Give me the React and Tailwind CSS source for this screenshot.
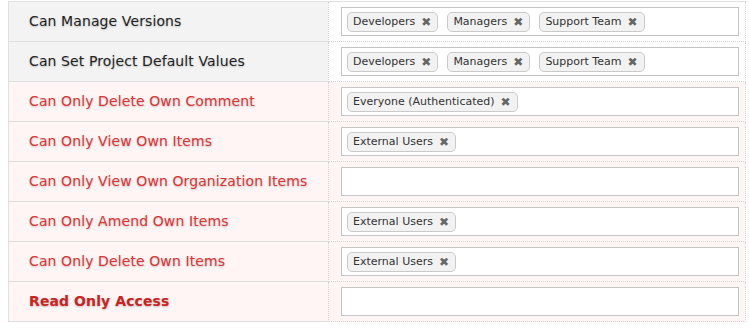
const rows = [
  { label: 'Can Manage Versions', tone: 'gray', tags: ['Developers', 'Managers', 'Support Team'] },
  { label: 'Can Set Project Default Values', tone: 'gray', tags: ['Developers', 'Managers', 'Support Team'] },
  { label: 'Can Only Delete Own Comment', tone: 'red', tags: ['Everyone (Authenticated)'] },
  { label: 'Can Only View Own Items', tone: 'red', tags: ['External Users'] },
  { label: 'Can Only View Own Organization Items', tone: 'red', tags: [] },
  { label: 'Can Only Amend Own Items', tone: 'red', tags: ['External Users'] },
  { label: 'Can Only Delete Own Items', tone: 'red', tags: ['External Users'] },
  { label: 'Read Only Access', tone: 'red', bold: true, tags: [] },
];

function Tag({ name }) {
  return (
    <span className="flex items-center h-[20px] pl-[5px] pr-[6px] gap-[6px] rounded-[5px] border border-[#cacaca] bg-[#f2f2f2] text-[11px] leading-none text-[#333] whitespace-nowrap">
      {name}
      <span className="text-[12px] text-[#666] font-bold leading-none">✖</span>
    </span>
  );
}

export default function App() {
  return (
    <div className="w-[749px] h-[328px] bg-white pt-px pl-2 font-['DejaVu_Sans','Verdana',sans-serif]">
      <div className="w-[738px] border-l border-t border-[#e0e0e0]">
        {rows.map(r => {
          const red = r.tone === 'red';
          return (
            <div key={r.label} className={'flex h-[40px] ' + (red ? 'bg-[#fff5f5]' : 'bg-[#f3f3f3]')}>
              <div
                className={
                  'w-[319px] flex items-center pl-[20px] border-b border-[#dedede] text-[14px] tracking-[0.1px] [text-shadow:0_1px_2px_rgba(0,0,0,0.22)] ' +
                  (r.bold ? 'font-bold text-[#cc2222]' : red ? 'text-[#dd3333]' : 'text-[#222]')
                }
              >
                {r.label}
              </div>
              <div className={'flex-1 flex items-center pl-3 pr-[6px] border-l border-b border-r border-dotted border-[#d4d4d4] ' + (red ? 'bg-[#fff5f5]' : 'bg-white')}>
                <div className="w-full h-[29px] border border-[#c4c4c4] bg-white flex items-center gap-[9px] px-[5px]">
                  {r.tags.map(t => <Tag key={t} name={t} />)}
                </div>
              </div>
            </div>
          );
        })}
      </div>
    </div>
  );
}
